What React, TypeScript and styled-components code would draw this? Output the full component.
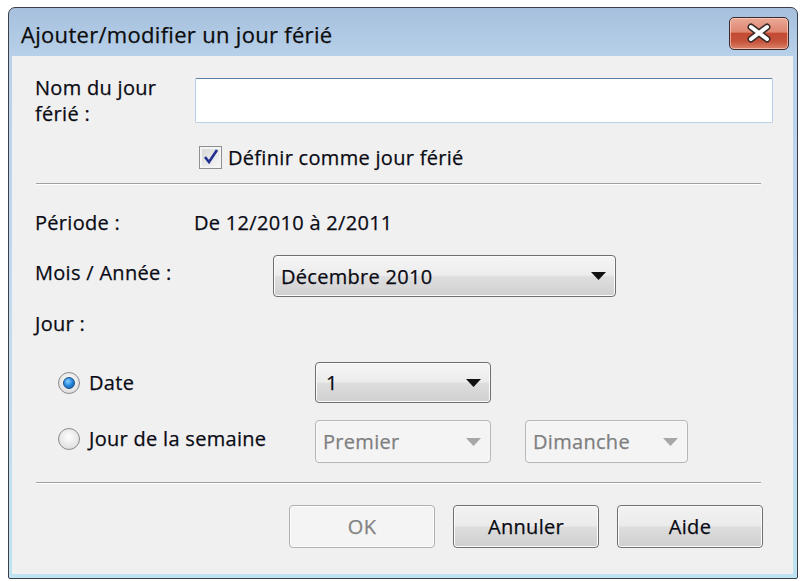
import styled, { createGlobalStyle } from 'styled-components';

const GlobalStyle = createGlobalStyle`
  html, body {
    margin: 0;
    padding: 0;
    background: #ffffff;
  }
  body {
    font-family: 'Open Sans', 'Noto Sans', sans-serif;
    font-size: 20px;
    letter-spacing: 0.3px;
    color: #0a0a14;
    -webkit-text-stroke: 0.25px currentColor;
  }
`;

const Caret = ({ disabled }: { disabled?: boolean }) => (
  <svg width="15" height="8" viewBox="0 0 15 8">
    <path d="M0 0 H15 L7.5 8 Z" fill={disabled ? '#a6a6a6' : '#111111'} />
  </svg>
);

const CloseGlyph = () => (
  <svg width="28" height="20" viewBox="0 0 28 20">
    <path
      d="M6 4 L22 16 M22 4 L6 16"
      stroke="#3a2a2a"
      strokeWidth="7"
      strokeLinecap="round"
    />
    <path
      d="M6 4 L22 16 M22 4 L6 16"
      stroke="#ffffff"
      strokeWidth="4"
      strokeLinecap="round"
    />
  </svg>
);

const CheckGlyph = () => (
  <svg width="16" height="16" viewBox="0 0 16 16">
    <path d="M2 8 L6 13 L14 1" stroke="#23308f" strokeWidth="2.6" fill="none" />
  </svg>
);

const App = () => {
  return (
    <>
      <GlobalStyle />
      <Window>
        <TitleBar>
          <Title>Ajouter/modifier un jour férié</Title>
          <CloseButton aria-label="Fermer">
            <CloseGlyph />
          </CloseButton>
        </TitleBar>

        <Body>
          <NameRow>
            <NameLabel>
              <div>Nom du jour</div>
              <div>férié :</div>
            </NameLabel>
            <TextInput />
          </NameRow>

          <CheckRow>
            <CheckBox>
              <CheckGlyph />
            </CheckBox>
            <span>Définir comme jour férié</span>
          </CheckRow>

          <Separator $top={14} />

          <FieldRow $top={26} $height={22}>
            <Label $width={159}>Période :</Label>
            <span>De 12/2010 à 2/2011</span>
          </FieldRow>

          <FieldRow $top={22} $height={42}>
            <Label $width={238} $lift={4}>Mois / Année :</Label>
            <Select $width={343}>
              <span>Décembre 2010</span>
              <Caret />
            </Select>
          </FieldRow>

          <FieldRow $top={15} $height={22}>
            <Label $width={160}>Jour :</Label>
          </FieldRow>

          <FieldRow $top={28} $height={41}>
            <RadioOption>
              <Radio $checked />
              <span>Date</span>
            </RadioOption>
            <Select $width={176} $pad={10}>
              <span>1</span>
              <Caret />
            </Select>
          </FieldRow>

          <FieldRow $top={17} $height={43}>
            <RadioOption $lift={3}>
              <Radio />
              <span>Jour de la semaine</span>
            </RadioOption>
            <Select $width={176} $disabled>
              <span>Premier</span>
              <Caret disabled />
            </Select>
            <Select $width={163} $disabled $gap={34}>
              <span>Dimanche</span>
              <Caret disabled />
            </Select>
          </FieldRow>

          <Separator $top={19} />

          <ButtonRow>
            <Button disabled>OK</Button>
            <Button>Annuler</Button>
            <Button>Aide</Button>
          </ButtonRow>
        </Body>
      </Window>
    </>
  );
};

export default App;

const Window = styled.div`
  margin: 7px 0 0 8px;
  width: 788px;
  height: 570px;
  border: 1px solid #3b4049;
  border-radius: 7px 7px 2px 2px;
  background: linear-gradient(180deg, #a6c0dd 0%, #b9d1ea 9%, #c4dbf0 60%, #bfe3f0 100%);
  display: flex;
  flex-direction: column;
  overflow: hidden;
`;

const TitleBar = styled.div`
  height: 48px;
  display: flex;
  align-items: center;
  justify-content: space-between;
  padding: 0 8px 0 12px;
  box-sizing: border-box;
`;

const Title = styled.div`
  font-size: 22px;
  letter-spacing: 0.3px;
  color: #0c0c0c;
  margin-top: 4px;
`;

const CloseButton = styled.button`
  width: 60px;
  height: 33px;
  margin-top: 2px;
  padding: 0;
  border: 1px solid #3d2b2b;
  border-radius: 5px;
  background: linear-gradient(
    180deg,
    #eba896 0%,
    #de8772 45%,
    #c44a33 50%,
    #c5533b 75%,
    #db8368 100%
  );
  box-shadow: inset 0 0 0 1px rgba(255, 220, 210, 0.6);
  display: flex;
  align-items: center;
  justify-content: center;
`;

const Body = styled.div`
  flex: 1;
  margin: 0 4px 4px 3px;
  background: #f0f0f0;
  padding: 22px 20px 0 23px;
  display: flex;
  flex-direction: column;
`;

const NameRow = styled.div`
  height: 45px;
  display: flex;
  align-items: flex-start;
`;

const NameLabel = styled.div`
  width: 160px;
  flex-shrink: 0;
  line-height: 26px;
  margin-top: -3px;
`;

const TextInput = styled.div`
  flex: 1;
  height: 45px;
  box-sizing: border-box;
  background: #ffffff;
  border: 1px solid #b7d0e8;
  border-top-color: #5a7ea6;
  border-radius: 2px;
`;

const CheckRow = styled.div`
  margin-top: 22px;
  height: 24px;
  padding-left: 164px;
  display: flex;
  align-items: center;
  gap: 6px;
`;

const CheckBox = styled.div`
  width: 23px;
  height: 23px;
  box-sizing: border-box;
  border: 1px solid #8f8f8f;
  background: linear-gradient(135deg, #d6d6d6, #f8f8f8);
  box-shadow: inset 0 0 0 2px #f4f4f4;
  display: flex;
  align-items: center;
  justify-content: center;
`;

const Separator = styled.div<{ $top: number }>`
  margin: ${(p) => p.$top}px 12px 0 1px;
  height: 1px;
  background: #a0a0a0;
  border-bottom: 1px solid #ffffff;
`;

const FieldRow = styled.div<{ $top: number; $height: number }>`
  margin-top: ${(p) => p.$top}px;
  height: ${(p) => p.$height}px;
  display: flex;
  align-items: center;
`;

const Label = styled.div<{ $width: number; $lift?: number }>`
  width: ${(p) => p.$width}px;
  flex-shrink: 0;
  margin-bottom: ${(p) => (p.$lift ?? 0) * 2}px;
`;

const Select = styled.div<{
  $width: number;
  $disabled?: boolean;
  $pad?: number;
  $gap?: number;
}>`
  width: ${(p) => p.$width}px;
  height: 100%;
  margin-left: ${(p) => p.$gap ?? 0}px;
  box-sizing: border-box;
  padding: 0 9px 0 ${(p) => p.$pad ?? 7}px;
  display: flex;
  align-items: center;
  justify-content: space-between;
  border-radius: 4px;
  border: 1px solid ${(p) => (p.$disabled ? '#b4b7ba' : '#6f6f6f')};
  color: ${(p) => (p.$disabled ? '#7f7f7f' : '#0a0a14')};
  background: ${(p) =>
    p.$disabled
      ? '#f4f4f4'
      : 'linear-gradient(180deg, #f5f5f5 0%, #ececec 48%, #dedede 52%, #d0d0d0 100%)'};
  box-shadow: inset 0 0 0 1px ${(p) => (p.$disabled ? '#f8f8f8' : '#fbfbfb')};
`;

const RadioOption = styled.div<{ $lift?: number }>`
  width: 257px;
  margin-left: 23px;
  margin-bottom: ${(p) => (p.$lift ?? 0) * 2}px;
  display: flex;
  align-items: center;
  gap: 9px;
`;

const Radio = styled.div<{ $checked?: boolean }>`
  width: 22px;
  height: 22px;
  box-sizing: border-box;
  border-radius: 50%;
  border: 1px solid #8b8b8b;
  background: radial-gradient(circle at 50% 40%, #ffffff 0%, #e2e2e2 70%, #cfcfcf 100%);
  display: flex;
  align-items: center;
  justify-content: center;

  &::after {
    content: '';
    display: ${(p) => (p.$checked ? 'block' : 'none')};
    width: 10px;
    height: 10px;
    border-radius: 50%;
    border: 1px solid #1c4f86;
    background: radial-gradient(circle at 40% 35%, #8fd0ff 0%, #2a8de0 45%, #0b4f9a 100%);
  }
`;

const ButtonRow = styled.div`
  margin: 21px 10px 0 0;
  display: flex;
  justify-content: flex-end;
  gap: 18px;
`;

const Button = styled.button`
  width: 146px;
  height: 43px;
  box-sizing: border-box;
  font: inherit;
  font-size: 20px;
  letter-spacing: 0.3px;
  color: #0a0a14;
  border-radius: 4px;
  border: 1px solid #707070;
  background: linear-gradient(180deg, #f2f2f2 0%, #ebebeb 48%, #dddddd 52%, #cfcfcf 100%);
  box-shadow: inset 0 0 0 1px #fcfcfc;

  &:disabled {
    color: #838383;
    border-color: #adb2b5;
    background: #f4f4f4;
  }
`;
